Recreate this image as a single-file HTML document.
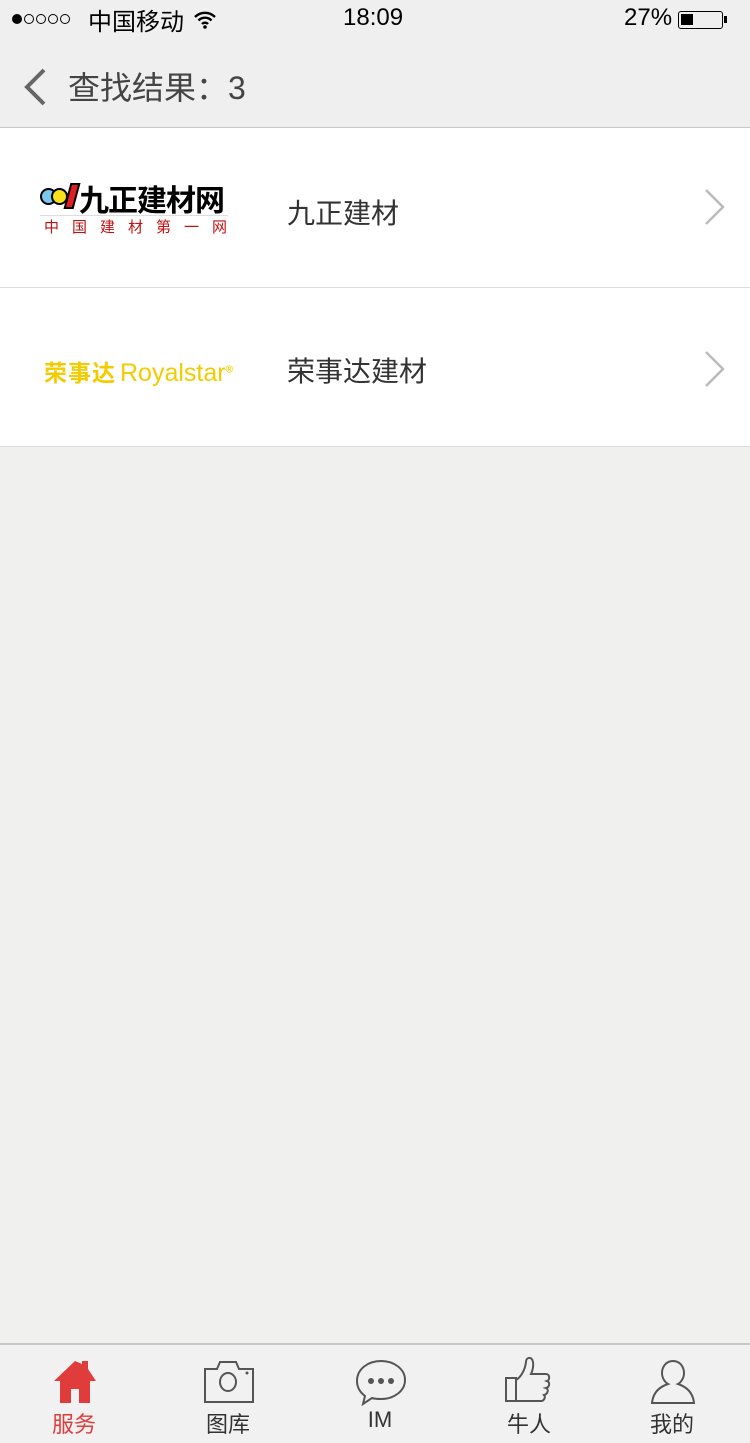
<!DOCTYPE html>
<html><head><meta charset="utf-8">
<style>
*{margin:0;padding:0;box-sizing:border-box}
body{width:750px;height:1443px;background:#f0f0ee;font-family:"Liberation Sans","Noto Sans CJK SC",sans-serif;position:relative;overflow:hidden}
.status{position:absolute;top:0;left:0;width:750px;height:40px;background:#efefef;font-size:24px;color:#000}
.nav{position:absolute;top:40px;left:0;width:750px;height:88px;background:#efefef;border-bottom:1px solid #c8c8c8}
.nav .t{position:absolute;left:68px;top:23px;font-size:32px;color:#444}
.list{position:absolute;top:128px;left:0;width:750px;background:#fff}
.row{height:160px;position:relative;border-bottom:1px solid #ddd}
.row2{height:159px}
.name{position:absolute;left:287px;font-size:28px;color:#333}
.chev{position:absolute;left:704px}
.tab{position:absolute;top:1343px;left:0;width:750px;height:100px;background:#f1f1f1;border-top:2px solid #c8c8c8}
.ti{position:absolute;top:0;width:100px;text-align:center}
.ti span{position:absolute;top:62px;left:0;width:100px;font-size:22px;color:#333}
</style></head><body>
<div class="status">
 <div style="position:absolute;left:12px;top:14px;display:flex;gap:2px">
  <div style="width:10px;height:10px;border-radius:50%;background:#000"></div>
  <div style="width:10px;height:10px;border-radius:50%;border:1px solid #000"></div>
  <div style="width:10px;height:10px;border-radius:50%;border:1px solid #000"></div>
  <div style="width:10px;height:10px;border-radius:50%;border:1px solid #000"></div>
  <div style="width:10px;height:10px;border-radius:50%;border:1px solid #000"></div>
 </div>
 <div style="position:absolute;left:88px;top:2px">中国移动</div>
 <svg style="position:absolute;left:193px;top:10px" width="24" height="20" viewBox="0 0 24 20"><path d="M2 7a14 14 0 0 1 20 0M5.5 10.5a9 9 0 0 1 13 0M9 14a4 4 0 0 1 6 0" stroke="#000" stroke-width="2.4" fill="none"/><circle cx="12" cy="17" r="1.8"/></svg>
 <div style="position:absolute;left:343px;top:4px">18:09</div>
 <div style="position:absolute;left:624px;top:4px">27%</div>
 <div style="position:absolute;left:678px;top:11px;width:45px;height:18px;border:1.5px solid #000;border-radius:3px"><div style="margin:2px;width:12px;height:11px;background:#000"></div></div>
 <div style="position:absolute;left:724px;top:16px;width:3px;height:7px;background:#000"></div>
</div>
<div class="nav">
 <svg style="position:absolute;left:22px;top:27px" width="26" height="40" viewBox="0 0 26 40"><path d="M22 3L5 20l17 17" stroke="#666" stroke-width="4" fill="none"/></svg>
 <div class="t">查找结果：3</div>
</div>
<div class="list">
 <div class="row">
  <div style="position:absolute;left:40px;top:58px;width:190px">
   <div style="position:absolute;left:0;top:2px;width:17px;height:17px;border-radius:50%;background:#7cc7f0;border:2px solid #000"></div>
   <div style="position:absolute;left:11px;top:2px;width:17px;height:17px;border-radius:50%;background:#f5e21a;border:2px solid #000"></div>
   <div style="position:absolute;left:27px;top:-3px;width:10px;height:26px;background:#e02020;transform:skewX(-15deg);border:2px solid #000"></div>
   <div style="position:absolute;left:39px;top:-10px;font-size:30px;font-weight:bold;color:#000;letter-spacing:-1px;white-space:nowrap">九正建材网</div>
   <div style="position:absolute;left:0;top:29px;width:188px;border-top:1px solid #ddd"></div>
   <div style="position:absolute;left:4px;top:30px;font-size:15px;color:#c01010;letter-spacing:13px;white-space:nowrap">中国建材第一网</div>
  </div>
  <div class="name" style="top:64px">九正建材</div>
  <svg class="chev" style="top:60px" width="22" height="38" viewBox="0 0 22 38"><path d="M2 2l17 17L2 36" stroke="#bbb" stroke-width="2.5" fill="none"/></svg>
 </div>
 <div class="row row2">
  <div style="position:absolute;left:44px;top:66px;font-size:23px;font-weight:bold;color:#f2cc00;white-space:nowrap;letter-spacing:1px">荣事达<span style="font-size:25px;font-weight:normal;letter-spacing:0;margin-left:4px">Royalstar</span><sup style="font-size:10px">®</sup></div>
  <div class="name" style="top:62px">荣事达建材</div>
  <svg class="chev" style="top:62px" width="22" height="38" viewBox="0 0 22 38"><path d="M2 2l17 17L2 36" stroke="#bbb" stroke-width="2.5" fill="none"/></svg>
 </div>
</div>
<div class="tab">
 <div class="ti" style="left:24px">
  <svg style="position:absolute;left:28px;top:14px" width="46" height="46" viewBox="0 0 46 46"><path d="M23 2L2 22h6v22h11V30h8v14h11V22h6L36 10V2h-6v3z" fill="#e03c3c"/></svg>
  <span style="color:#e03c3c">服务</span></div>
 <div class="ti" style="left:178px">
  <svg style="position:absolute;left:25px;top:14px" width="52" height="46" viewBox="0 0 52 46"><path d="M2 10h12l3-7h16l3 7h14v33H2z" stroke="#555" stroke-width="2" fill="none"/><ellipse cx="25" cy="23" rx="8" ry="9" stroke="#555" stroke-width="2" fill="none"/><circle cx="44" cy="14" r="1.5" fill="#555"/></svg>
  <span>图库</span></div>
 <div class="ti" style="left:330px">
  <svg style="position:absolute;left:25px;top:14px" width="52" height="48" viewBox="0 0 52 48"><path d="M26 2C13 2 2 10 2 22c0 7 4 12 8 15l-2 8 9-6c3 1 6 1 9 1 13 0 24-8 24-19S39 2 26 2z" stroke="#555" stroke-width="2" fill="none"/><circle cx="16" cy="22" r="3" fill="#555"/><circle cx="26" cy="22" r="3" fill="#555"/><circle cx="36" cy="22" r="3" fill="#555"/></svg>
  <span>IM</span></div>
 <div class="ti" style="left:479px">
  <svg style="position:absolute;left:25px;top:10px" width="50" height="52" viewBox="0 0 50 52"><path d="M2 23h10v23H2zM12 25c5-3 9-10 10-18 0-5 6-6 7 0 1 6-2 12-2 12h15c4 0 4 6 1 7 3 1 3 6-1 7 3 1 2 6-2 7 2 2 0 6-3 6H12" stroke="#555" stroke-width="2" fill="none"/></svg>
  <span>牛人</span></div>
 <div class="ti" style="left:622px">
  <svg style="position:absolute;left:28px;top:14px" width="46" height="46" viewBox="0 0 46 46"><path d="M23 2c-7 0-11 6-11 12 0 6 4 10 6 11C9 28 3 34 2 44h42c-1-10-7-16-16-19 2-1 6-5 6-11 0-6-4-12-11-12z" stroke="#555" stroke-width="2" fill="none"/></svg>
  <span>我的</span></div>
</div>
</body></html>
